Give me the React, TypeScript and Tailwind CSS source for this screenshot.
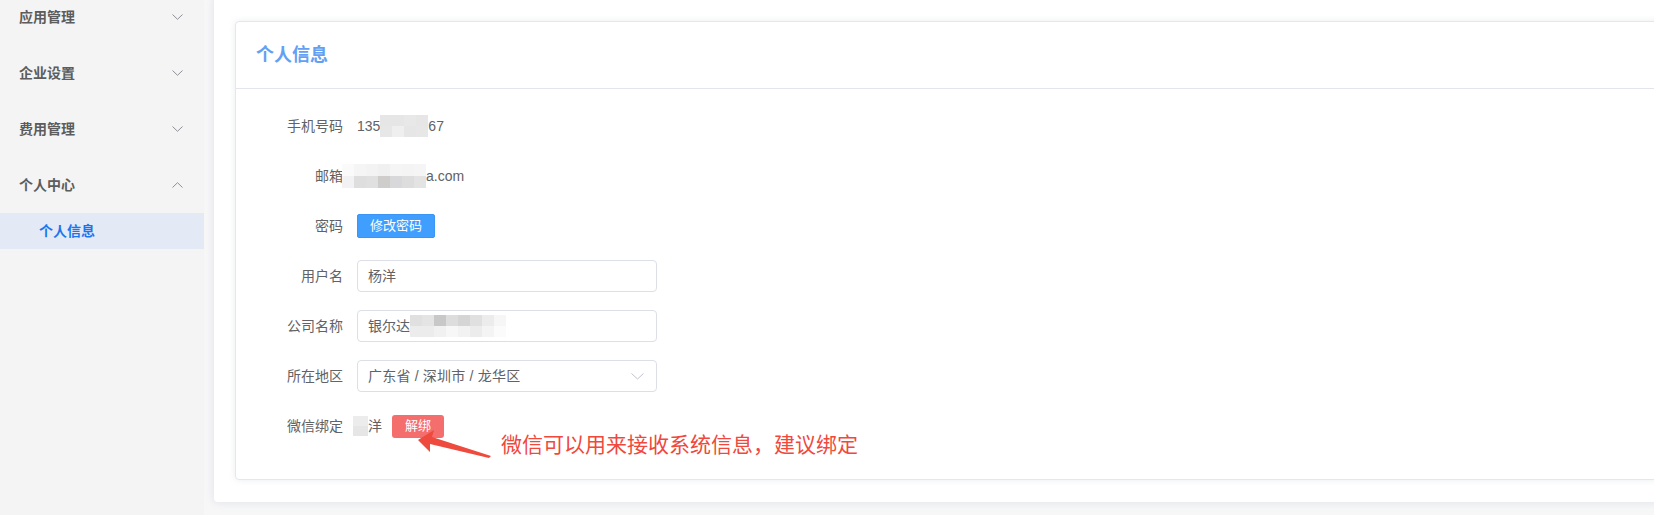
import React from "react";

const FONT = { fontFamily: '"Liberation Sans", "Noto Sans CJK SC", sans-serif' };

function Chevron({ up = false, className = "" }: { up?: boolean; className?: string }) {
  return (
    <svg width="11" height="6" viewBox="0 0 11 6" className={className} fill="none">
      {up ? (
        <path d="M0.5 5.5 L5.5 0.7 L10.5 5.5" stroke="#8d9096" strokeWidth="1" />
      ) : (
        <path d="M0.5 0.5 L5.5 5.3 L10.5 0.5" stroke="#8d9096" strokeWidth="1" />
      )}
    </svg>
  );
}

function Mosaic({ rows, cellW, cellH }: { rows: string[][]; cellW: number; cellH: number }) {
  return (
    <div className="flex flex-col shrink-0">
      {rows.map((r, i) => (
        <div key={i} className="flex">
          {r.map((c, j) => (
            <div key={j} style={{ width: cellW, height: cellH, background: c }} />
          ))}
        </div>
      ))}
    </div>
  );
}

function Row({ label, children }: { label: string; children: React.ReactNode }) {
  return (
    <div className="flex h-[50px] items-center">
      <div className="w-[121px] shrink-0 pr-[14px] text-right text-[14px] text-[#606266]">{label}</div>
      <div className="flex items-center text-[14px] text-[#606266]">{children}</div>
    </div>
  );
}

export default function App() {
  return (
    <div className="relative flex h-[515px] w-[1654px] overflow-hidden bg-[#f7f7f8]" style={FONT}>
      {/* Sidebar */}
      <aside className="h-full w-[204px] shrink-0 bg-[#f4f4f5]">
        <div className="-mt-[11px]">
          {[
            ["应用管理", false],
            ["企业设置", false],
            ["费用管理", false],
            ["个人中心", true],
          ].map(([t, up]) => (
            <div key={t as string} className="flex h-[56px] items-center justify-between pl-[19px] pr-[21px]">
              <span className="text-[14px] font-bold text-[#5c5c5c]">{t}</span>
              <Chevron up={up as boolean} />
            </div>
          ))}
          <div className="flex h-[36px] items-center bg-[#e3eaf5] pl-[39px]">
            <span className="text-[14px] font-bold text-[#1a75f0]">个人信息</span>
          </div>
        </div>
      </aside>

      {/* Main */}
      <main className="flex-1 pl-[10px]">
        <div className="-mt-[4px] -mr-[40px] rounded-[4px] bg-white pb-[22px] pl-[21px] pt-[25px] shadow-[0_0_8px_rgba(180,182,200,0.35)]">
          <div className="relative -mr-[10px] rounded-[4px] border border-[#e6e7ee] bg-white shadow-[0_0_6px_rgba(200,202,215,0.35)]">
            <div className="flex h-[67px] items-center border-b border-[#e3e5ec] pl-[20px]">
              <span className="text-[18px] font-bold text-[#63a0f3]">个人信息</span>
            </div>
            <div className="pb-[28px] pt-[12px]">
              <Row label="手机号码">
                <span>135</span>
                <Mosaic
                  cellW={12}
                  cellH={11}
                  rows={[
                    ["#e6e6e6", "#e6e6e6", "#e8e8e8", "#e6e6e6"],
                    ["#e7e7e7", "#efefef", "#e6e6e6", "#e7e7e7"],
                  ]}
                />
                <span>67</span>
              </Row>
              <Row label="邮箱">
                <div className="-ml-[15px] flex items-center">
                  <Mosaic
                    cellW={12}
                    cellH={12}
                    rows={[
                      ["#fafafa", "#f5f5f5", "#f3f3f3", "#f0f0f0", "#f5f5f5", "#f4f4f4", "#f5f5f5"],
                      ["#f2f2f5", "#dedede", "#e0e0e0", "#cfcdcb", "#d8d8da", "#dddddd", "#e3e3e3"],
                    ]}
                  />
                  <span>a.com</span>
                </div>
              </Row>
              <Row label="密码">
                <button className="h-[24px] w-[78px] rounded-[2px] border border-[#3b95f5] bg-[#409eff] text-[13px] text-white">
                  修改密码
                </button>
              </Row>
              <Row label="用户名">
                <div className="flex h-[32px] w-[300px] items-center rounded-[4px] border border-[#dcdfe6] px-[10px]">
                  杨洋
                </div>
              </Row>
              <Row label="公司名称">
                <div className="flex h-[32px] w-[300px] items-center rounded-[4px] border border-[#dcdfe6] px-[10px]">
                  <span>银尔达</span>
                  <Mosaic
                    cellW={12}
                    cellH={11}
                    rows={[
                      ["#e0e0e0", "#e4e4e4", "#c8c8c8", "#dddddd", "#d5d5d5", "#e0e0e0", "#ececec", "#f6f6f6"],
                      ["#ececec", "#ececec", "#f1f1f1", "#f7f7f7", "#f2f2f2", "#ececec", "#f4f4f4", "#fbfbfb"],
                    ]}
                  />
                </div>
              </Row>
              <Row label="所在地区">
                <div className="flex h-[32px] w-[300px] items-center justify-between rounded-[4px] border border-[#dcdfe6] pl-[10px] pr-[12px]">
                  <span className="tracking-[0.2px]">广东省&nbsp;/&nbsp;深圳市&nbsp;/&nbsp;龙华区</span>
                  <svg width="13" height="7" viewBox="0 0 13 7" fill="none">
                    <path d="M0.5 0.5 L6.5 6 L12.5 0.5" stroke="#c0c4cc" strokeWidth="1" />
                  </svg>
                </div>
              </Row>
              <Row label="微信绑定">
                <div className="-ml-[4px] flex items-center">
                  <Mosaic cellW={15} cellH={10} rows={[["#ececec"], ["#e6e6e6"]]} />
                  <span>洋</span>
                  <button className="ml-[10px] h-[23px] w-[52px] rounded-[3px] bg-[#f46e6e] text-[13px] text-white">
                    解绑
                  </button>
                </div>
              </Row>
            </div>

            {/* Annotation arrow */}
            <svg
              className="absolute left-[180px] top-[408px]"
              width="80"
              height="30"
              viewBox="0 0 80 30"
              fill="none"
            >
              <polygon points="2,10 18,0 16,7 75,26 73,28 14,14 14,22" fill="#ee4a3d" />
            </svg>
            <span className="absolute left-[265px] top-[408px] text-[21px] leading-[30px] text-[#f0483c]">
              微信可以用来接收系统信息，建议绑定
            </span>
          </div>
        </div>
      </main>
    </div>
  );
}
